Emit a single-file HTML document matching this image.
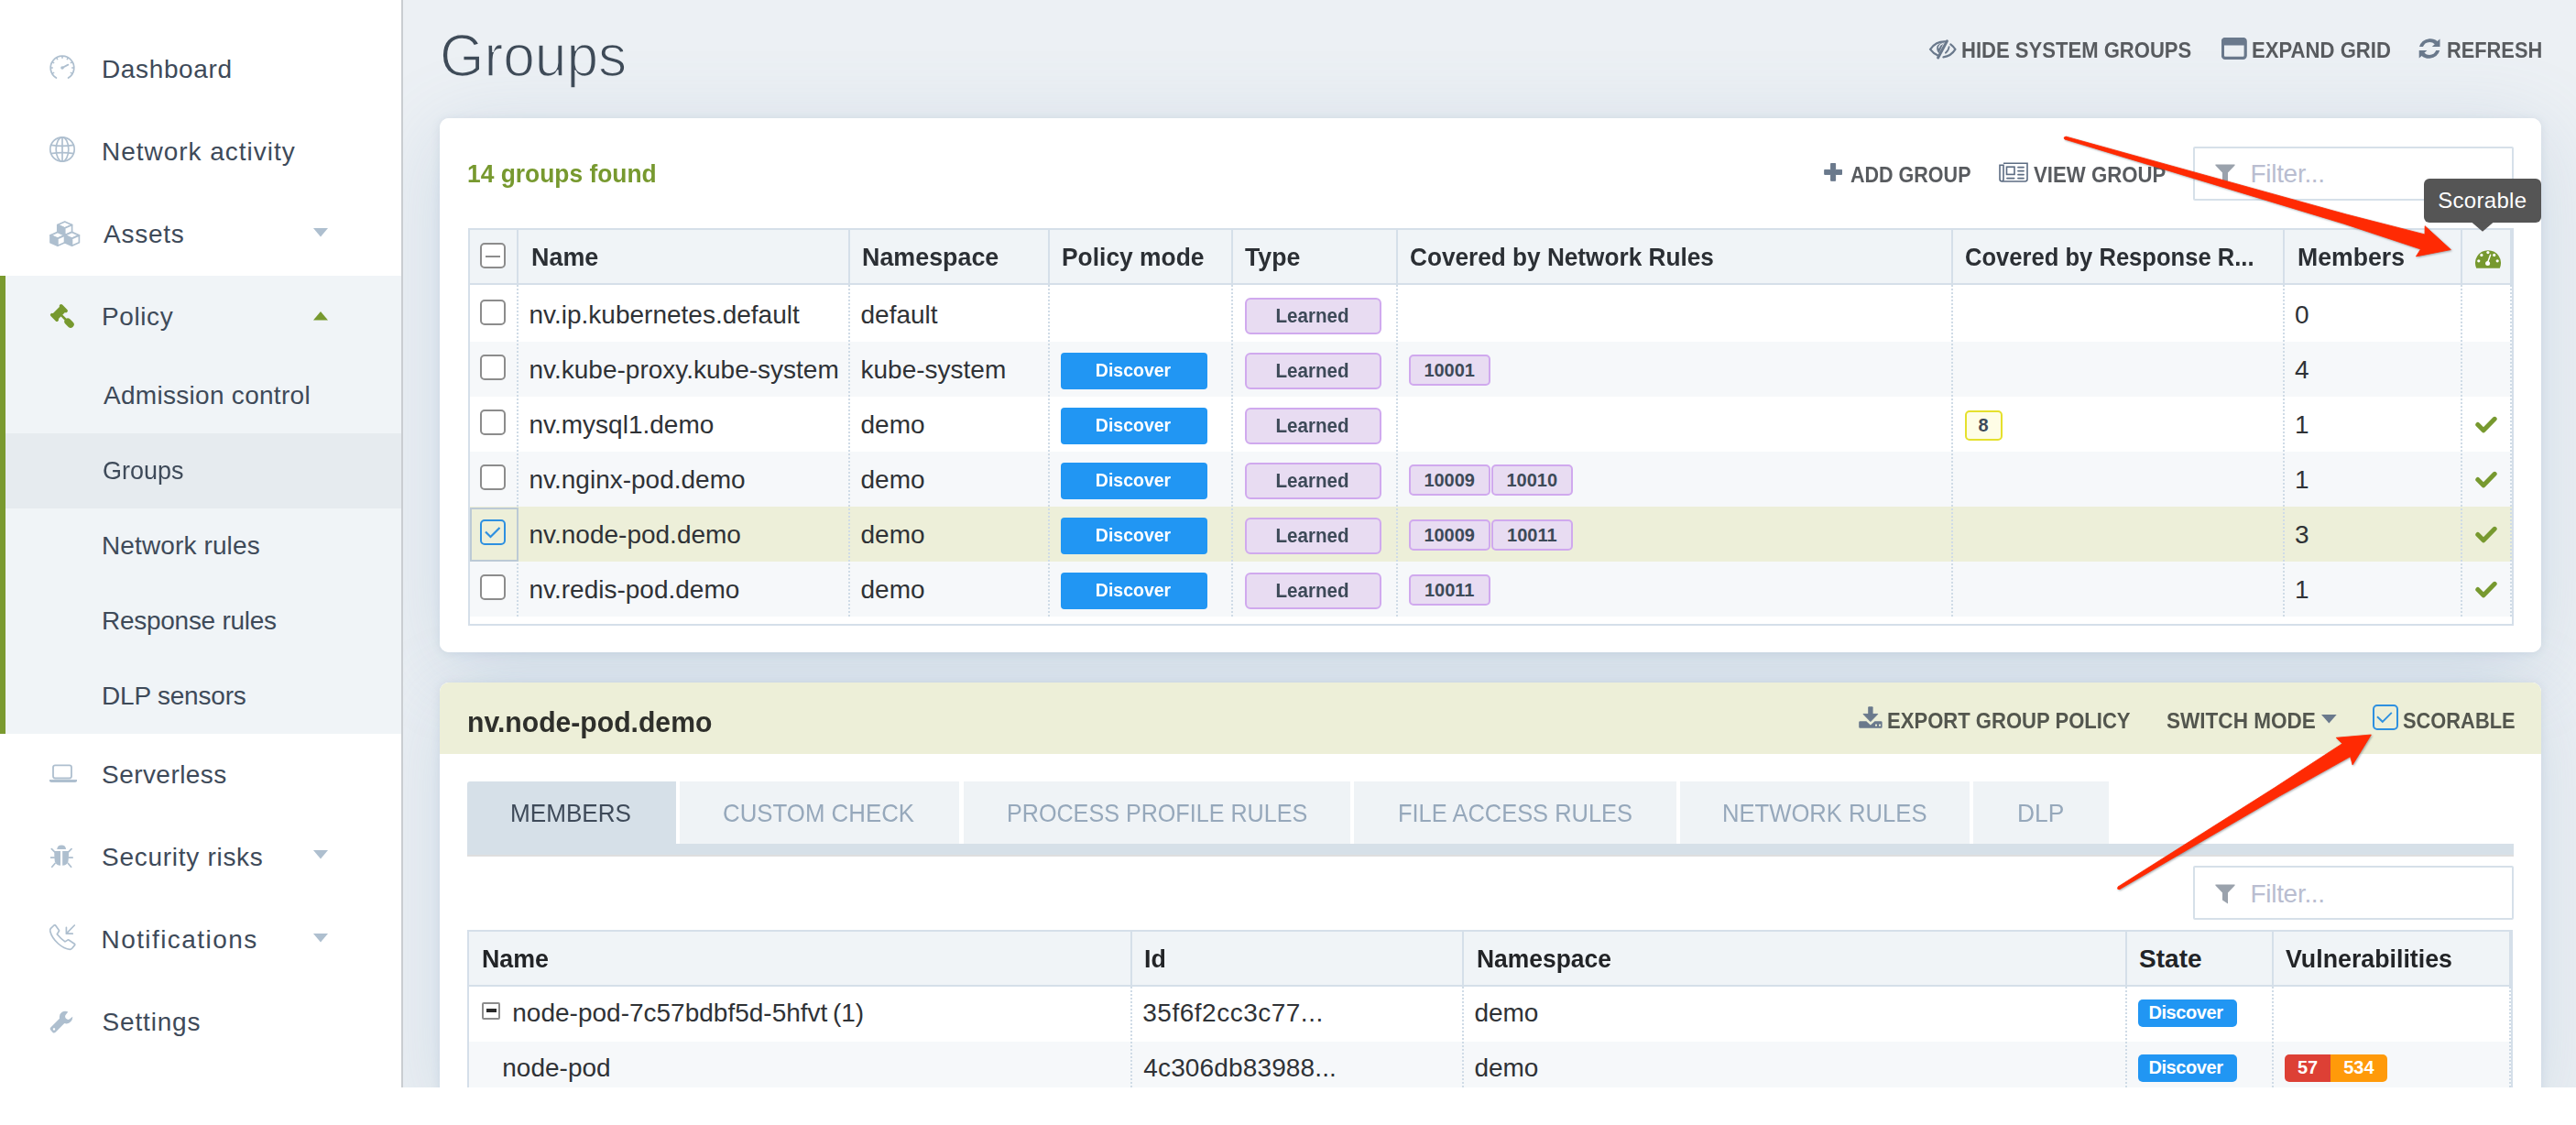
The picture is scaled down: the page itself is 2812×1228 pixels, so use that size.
<!DOCTYPE html>
<html><head><meta charset="utf-8"><title>Groups</title>
<style>
html,body{margin:0;padding:0}
body{width:2812px;height:1228px;position:relative;overflow:hidden;background:#fff;font-family:"Liberation Sans",sans-serif}
.t{position:absolute;white-space:nowrap;line-height:1}
.r{position:absolute;box-sizing:border-box}
</style></head><body>

<div class="r" style="left:0px;top:0px;width:439px;height:1187px;background:#fff;"></div>
<div class="r" style="left:438px;top:0px;width:2px;height:1187px;background:#C9CDD1;"></div>
<div class="r" style="left:440px;top:0px;width:2372px;height:1187px;background:#ECF0F4;"></div>
<div class="t" style="left:480.0px;top:28.7px;font-size:64px;color:#3F4B58;transform:scaleX(0.9726);transform-origin:0 0;-webkit-text-stroke:1.6px #ECF0F4;">Groups</div>
<div class="t" style="left:2140.5px;top:42.9px;font-size:24px;font-weight:700;color:#585B5F;transform:scaleX(0.9192);transform-origin:0 0;">HIDE SYSTEM GROUPS</div>
<div class="t" style="left:2458.2px;top:42.9px;font-size:24px;font-weight:700;color:#585B5F;transform:scaleX(0.9212);transform-origin:0 0;">EXPAND GRID</div>
<div class="t" style="left:2670.5px;top:42.9px;font-size:24px;font-weight:700;color:#585B5F;transform:scaleX(0.9084);transform-origin:0 0;">REFRESH</div>
<svg class="r" style="left:2100px;top:35px;" width="50" height="40" viewBox="0 0 50 40"><g fill="none" stroke="#6A798C" stroke-linecap="round"><path d="M24.2 10.4 Q18.5 10 14.2 12.2 Q9.8 14.6 7.1 18.8 Q10.5 23.3 15.4 25.6" stroke-width="2.2"/><path d="M29.3 13.4 Q32.4 15.7 34.4 18.8 Q29.8 26.2 21.4 27.3" stroke-width="2.2"/><path d="M27.6 16.2 Q27.2 20.2 23.8 22.8" stroke-width="1.7"/><path d="M25.4 9.9 L15.6 28" stroke-width="3"/></g><path d="M21.8 11.6 Q16.5 11.8 14.3 15.8 Q13.6 20.6 16.6 23.2 Z" fill="#6A798C"/><path d="M16.4 17.2 Q17.2 13.5 20.6 12.6" fill="none" stroke="#ECF0F4" stroke-width="1.1" stroke-linecap="round"/></svg>
<svg class="r" style="left:2424.7px;top:41px;" width="28" height="24" viewBox="0 0 28 24"><rect x="1.4" y="1.4" width="24.8" height="21" rx="2.6" fill="none" stroke="#6A798C" stroke-width="3.2"/><rect x="1" y="1" width="25.6" height="7.4" rx="2" fill="#6A798C"/></svg>
<svg class="r" style="left:2640.3px;top:41px;" width="24.5" height="24" viewBox="0 0 24.5 24"><g fill="#6A798C"><path d="M1 10 Q3 2.5 12 1.2 Q17.5 1 20.6 4 L23.5 1.4 V10 H14.8 L17.8 7.2 Q15.5 5 12.2 5 Q6.8 5.2 5 10 Z"/><path d="M23.2 14 Q21.2 21.5 12.2 22.8 Q6.7 23 3.6 20 L0.7 22.6 V14 H9.4 L6.4 16.8 Q8.7 19 12 19 Q17.4 18.8 19.2 14 Z"/></g></svg>
<div class="r" style="left:480px;top:129px;width:2294px;height:583px;background:#fff;border-radius:10px;box-shadow:0 1px 10px rgba(100,130,160,0.15),0 18px 90px rgba(100,140,180,0.22);"></div>
<div class="r" style="left:480px;top:745px;width:2294px;height:460px;background:#fff;border-radius:10px;box-shadow:0 1px 10px rgba(100,130,160,0.15),0 18px 90px rgba(100,140,180,0.22);"></div>
<div class="r" style="left:480px;top:129px;width:2294px;height:583px;background:#fff;border-radius:10px;"></div>
<div class="t" style="left:509.5px;top:175.5px;font-size:28px;font-weight:700;color:#77992F;transform:scaleX(0.9426);transform-origin:0 0;">14 groups found</div>
<svg class="r" style="left:1990px;top:177px;" width="22" height="22" viewBox="0 0 22 22"><path d="M8.6 1.5 H13.6 V8.4 H20.5 V13.4 H13.6 V20.3 H8.6 V13.4 H1.7 V8.4 H8.6Z" fill="#6A798C" stroke="#6A798C" stroke-width="1" stroke-linejoin="round"/></svg>
<div class="t" style="left:2020.2px;top:178.5px;font-size:24px;font-weight:700;color:#585B5F;transform:scaleX(0.8964);transform-origin:0 0;">ADD GROUP</div>
<svg class="r" style="left:2182.4px;top:176.9px;" width="32" height="22" viewBox="0 0 32 22"><g fill="none" stroke="#5C6C82" stroke-width="1.6"><path d="M5 1.2 H31 V18.5 Q31 21 28.5 21 H3.5 Q1 21 1 18.5 V3.3 H5 V18.5 Q5 20.8 3.2 21"/><rect x="8.5" y="5.2" width="8.5" height="8.2"/></g><g stroke="#5C6C82" stroke-width="1.8" stroke-linecap="round"><path d="M21 5.6H27M21 9.6H27M21 13.6H27M9 17.6H16.6M21 17.6H27"/></g></svg>
<div class="t" style="left:2220.0px;top:178.6px;font-size:24px;font-weight:700;color:#585B5F;transform:scaleX(0.9250);transform-origin:0 0;">VIEW GROUP</div>
<div class="r" style="left:2394px;top:159.6px;width:350px;height:59px;border:2px solid #D6E0E9;border-radius:2px;background:#fff;"></div>
<svg class="r" style="left:2418px;top:179.4px;" width="22" height="22" viewBox="0 0 22 22"><path d="M0.8 0.5 H21.2 Q22 0.5 21.6 1.5 L14 9.6 V21.6 L8 17.6 V9.6 L0.4 1.5 Q0 0.5 0.8 0.5Z" fill="#9AA2AC"/></svg>
<div class="t" style="left:2456.5px;top:175.9px;font-size:28px;color:#B9BDD0;letter-spacing:-0.3px;">Filter...</div>
<div class="r" style="left:510.5px;top:249px;width:2233.0px;height:434px;border:2px solid #D5DFE9;"></div>
<div class="r" style="left:512.5px;top:251px;width:2229.0px;height:58px;background:#F0F4F7;"></div>
<div class="r" style="left:512.5px;top:309px;width:2229.0px;height:2px;background:#D5DFE9;"></div>
<div class="r" style="left:564px;top:251px;width:2px;height:58px;background:#D5DFE9;"></div>
<div class="r" style="left:926px;top:251px;width:2px;height:58px;background:#D5DFE9;"></div>
<div class="r" style="left:1144px;top:251px;width:2px;height:58px;background:#D5DFE9;"></div>
<div class="r" style="left:1344px;top:251px;width:2px;height:58px;background:#D5DFE9;"></div>
<div class="r" style="left:1524px;top:251px;width:2px;height:58px;background:#D5DFE9;"></div>
<div class="r" style="left:2130px;top:251px;width:2px;height:58px;background:#D5DFE9;"></div>
<div class="r" style="left:2492px;top:251px;width:2px;height:58px;background:#D5DFE9;"></div>
<div class="r" style="left:2686px;top:251px;width:2px;height:58px;background:#D5DFE9;"></div>
<div class="r" style="left:2739.5px;top:251px;width:2px;height:58px;background:#D5DFE9;"></div>
<div class="r" style="left:512.5px;top:311px;width:2229.0px;height:62px;background:#fff;"></div>
<div class="r" style="left:512.5px;top:373px;width:2229.0px;height:60px;background:#F6F8FA;"></div>
<div class="r" style="left:512.5px;top:433px;width:2229.0px;height:60px;background:#fff;"></div>
<div class="r" style="left:512.5px;top:493px;width:2229.0px;height:60px;background:#F6F8FA;"></div>
<div class="r" style="left:512.5px;top:553px;width:2229.0px;height:60px;background:#EDEFD9;"></div>
<div class="r" style="left:512.5px;top:613px;width:2229.0px;height:60px;background:#F6F8FA;"></div>
<div class="r" style="left:564px;top:311px;width:2px;height:362px;border-left:2px dotted #CFDBE6;"></div>
<div class="r" style="left:926px;top:311px;width:2px;height:362px;border-left:2px dotted #CFDBE6;"></div>
<div class="r" style="left:1144px;top:311px;width:2px;height:362px;border-left:2px dotted #CFDBE6;"></div>
<div class="r" style="left:1344px;top:311px;width:2px;height:362px;border-left:2px dotted #CFDBE6;"></div>
<div class="r" style="left:1524px;top:311px;width:2px;height:362px;border-left:2px dotted #CFDBE6;"></div>
<div class="r" style="left:2130px;top:311px;width:2px;height:362px;border-left:2px dotted #CFDBE6;"></div>
<div class="r" style="left:2492px;top:311px;width:2px;height:362px;border-left:2px dotted #CFDBE6;"></div>
<div class="r" style="left:2686px;top:311px;width:2px;height:362px;border-left:2px dotted #CFDBE6;"></div>
<div class="r" style="left:2739.5px;top:311px;width:2px;height:362px;border-left:2px dotted #CFDBE6;"></div>
<div class="t" style="left:579.5px;top:267.4px;font-size:28px;font-weight:700;color:#2B2F34;transform:scaleX(0.9607);transform-origin:0 0;">Name</div>
<div class="t" style="left:941.3px;top:267.4px;font-size:28px;font-weight:700;color:#2B2F34;transform:scaleX(0.9589);transform-origin:0 0;">Namespace</div>
<div class="t" style="left:1159.3px;top:267.4px;font-size:28px;font-weight:700;color:#2B2F34;transform:scaleX(0.9424);transform-origin:0 0;">Policy mode</div>
<div class="t" style="left:1358.9px;top:267.4px;font-size:28px;font-weight:700;color:#2B2F34;transform:scaleX(0.9526);transform-origin:0 0;">Type</div>
<div class="t" style="left:1539.4px;top:267.4px;font-size:28px;font-weight:700;color:#2B2F34;transform:scaleX(0.9352);transform-origin:0 0;">Covered by Network Rules</div>
<div class="t" style="left:2145.4px;top:267.4px;font-size:28px;font-weight:700;color:#2B2F34;transform:scaleX(0.9135);transform-origin:0 0;">Covered by Response R...</div>
<div class="t" style="left:2507.5px;top:267.4px;font-size:28px;font-weight:700;color:#2B2F34;transform:scaleX(0.9512);transform-origin:0 0;">Members</div>
<div class="r" style="left:524px;top:265.4px;width:28px;height:27.5px;border:2.2px solid #8C8C8C;border-radius:5px;background:#fff;"></div>
<div class="r" style="left:530px;top:279px;width:16px;height:2px;background:#8C8C8C;"></div>
<div class="r" style="left:512.5px;top:553.5px;width:53px;height:59px;border:2px solid #BCCAD5;"></div>
<div class="r" style="left:524px;top:327.3px;width:28px;height:27.5px;border:2.2px solid #8C8C8C;border-radius:5px;background:#fff;"></div>
<div class="t" style="left:577.5px;top:329.8px;font-size:28px;color:#2F3236;">nv.ip.kubernetes.default</div>
<div class="t" style="left:939.5px;top:329.8px;font-size:28px;color:#2F3236;">default</div>
<div class="t" style="left:2505.0px;top:329.8px;font-size:28px;color:#2F3236;">0</div>
<div class="r" style="left:1358.6px;top:324.8px;width:149px;height:40px;background:#E8DCF2;border:2px solid #D0A9EE;border-radius:6px;"></div>
<div class="t" style="left:1357.6px;top:334.1px;font-size:22px;font-weight:700;color:#3D4A58;transform:scaleX(0.9369);transform-origin:50% 0;width:149px;text-align:center;">Learned</div>
<div class="r" style="left:524px;top:387.3px;width:28px;height:27.5px;border:2.2px solid #8C8C8C;border-radius:5px;background:#fff;"></div>
<div class="t" style="left:577.5px;top:389.8px;font-size:28px;color:#2F3236;">nv.kube-proxy.kube-system</div>
<div class="t" style="left:939.5px;top:389.8px;font-size:28px;color:#2F3236;">kube-system</div>
<div class="t" style="left:2505.0px;top:389.8px;font-size:28px;color:#2F3236;">4</div>
<div class="r" style="left:1158px;top:385.2px;width:160px;height:39.6px;background:#2196F3;border-radius:4px;"></div>
<div class="t" style="left:1156.5px;top:393.3px;font-size:21px;font-weight:700;color:#fff;transform:scaleX(0.9290);transform-origin:50% 0;width:160px;text-align:center;">Discover</div>
<div class="r" style="left:1358.6px;top:384.8px;width:149px;height:40px;background:#E8DCF2;border:2px solid #D0A9EE;border-radius:6px;"></div>
<div class="t" style="left:1357.6px;top:394.1px;font-size:22px;font-weight:700;color:#3D4A58;transform:scaleX(0.9369);transform-origin:50% 0;width:149px;text-align:center;">Learned</div>
<div class="r" style="left:1538.2px;top:387.3px;width:89px;height:34px;background:#E8DCF2;border:2px solid #D0A9EE;border-radius:5px;"></div>
<div class="t" style="left:1537.7px;top:393.9px;font-size:20px;font-weight:700;color:#3D4A58;width:89px;text-align:center;">10001</div>
<div class="r" style="left:524px;top:447.3px;width:28px;height:27.5px;border:2.2px solid #8C8C8C;border-radius:5px;background:#fff;"></div>
<div class="t" style="left:577.5px;top:449.8px;font-size:28px;color:#2F3236;">nv.mysql1.demo</div>
<div class="t" style="left:939.5px;top:449.8px;font-size:28px;color:#2F3236;">demo</div>
<div class="t" style="left:2505.0px;top:449.8px;font-size:28px;color:#2F3236;">1</div>
<div class="r" style="left:1158px;top:445.2px;width:160px;height:39.6px;background:#2196F3;border-radius:4px;"></div>
<div class="t" style="left:1156.5px;top:453.3px;font-size:21px;font-weight:700;color:#fff;transform:scaleX(0.9290);transform-origin:50% 0;width:160px;text-align:center;">Discover</div>
<div class="r" style="left:1358.6px;top:444.8px;width:149px;height:40px;background:#E8DCF2;border:2px solid #D0A9EE;border-radius:6px;"></div>
<div class="t" style="left:1357.6px;top:454.1px;font-size:22px;font-weight:700;color:#3D4A58;transform:scaleX(0.9369);transform-origin:50% 0;width:149px;text-align:center;">Learned</div>
<svg class="r" style="left:2702px;top:454px;" width="24" height="19" viewBox="0 0 24 19"><path d="M2.8 9.5 L9 15.8 L21.2 3.3" fill="none" stroke="#77992F" stroke-width="5" stroke-linejoin="round" stroke-linecap="round"/></svg>
<div class="r" style="left:524px;top:507.3px;width:28px;height:27.5px;border:2.2px solid #8C8C8C;border-radius:5px;background:#fff;"></div>
<div class="t" style="left:577.5px;top:509.8px;font-size:28px;color:#2F3236;">nv.nginx-pod.demo</div>
<div class="t" style="left:939.5px;top:509.8px;font-size:28px;color:#2F3236;">demo</div>
<div class="t" style="left:2505.0px;top:509.8px;font-size:28px;color:#2F3236;">1</div>
<div class="r" style="left:1158px;top:505.2px;width:160px;height:39.6px;background:#2196F3;border-radius:4px;"></div>
<div class="t" style="left:1156.5px;top:513.3px;font-size:21px;font-weight:700;color:#fff;transform:scaleX(0.9290);transform-origin:50% 0;width:160px;text-align:center;">Discover</div>
<div class="r" style="left:1358.6px;top:504.8px;width:149px;height:40px;background:#E8DCF2;border:2px solid #D0A9EE;border-radius:6px;"></div>
<div class="t" style="left:1357.6px;top:514.1px;font-size:22px;font-weight:700;color:#3D4A58;transform:scaleX(0.9369);transform-origin:50% 0;width:149px;text-align:center;">Learned</div>
<div class="r" style="left:1538.2px;top:507.3px;width:89px;height:34px;background:#E8DCF2;border:2px solid #D0A9EE;border-radius:5px;"></div>
<div class="t" style="left:1537.7px;top:513.9px;font-size:20px;font-weight:700;color:#3D4A58;width:89px;text-align:center;">10009</div>
<div class="r" style="left:1628.3px;top:507.3px;width:89px;height:34px;background:#E8DCF2;border:2px solid #D0A9EE;border-radius:5px;"></div>
<div class="t" style="left:1627.8px;top:513.9px;font-size:20px;font-weight:700;color:#3D4A58;width:89px;text-align:center;">10010</div>
<svg class="r" style="left:2702px;top:514px;" width="24" height="19" viewBox="0 0 24 19"><path d="M2.8 9.5 L9 15.8 L21.2 3.3" fill="none" stroke="#77992F" stroke-width="5" stroke-linejoin="round" stroke-linecap="round"/></svg>
<div class="r" style="left:524px;top:567.3px;width:28px;height:27.5px;border:2.2px solid #2E90E0;border-radius:5px;background:transparent;"></div>
<svg class="r" style="left:524px;top:567.3px;" width="28" height="28" viewBox="0 0 28 28"><path d="M6 13.5 L11.5 19 L21.5 9" fill="none" stroke="#2E90E0" stroke-width="2.2"/></svg>
<div class="t" style="left:577.5px;top:569.8px;font-size:28px;color:#2F3236;">nv.node-pod.demo</div>
<div class="t" style="left:939.5px;top:569.8px;font-size:28px;color:#2F3236;">demo</div>
<div class="t" style="left:2505.0px;top:569.8px;font-size:28px;color:#2F3236;">3</div>
<div class="r" style="left:1158px;top:565.2px;width:160px;height:39.6px;background:#2196F3;border-radius:4px;"></div>
<div class="t" style="left:1156.5px;top:573.3px;font-size:21px;font-weight:700;color:#fff;transform:scaleX(0.9290);transform-origin:50% 0;width:160px;text-align:center;">Discover</div>
<div class="r" style="left:1358.6px;top:564.8px;width:149px;height:40px;background:#E8DCF2;border:2px solid #D0A9EE;border-radius:6px;"></div>
<div class="t" style="left:1357.6px;top:574.1px;font-size:22px;font-weight:700;color:#3D4A58;transform:scaleX(0.9369);transform-origin:50% 0;width:149px;text-align:center;">Learned</div>
<div class="r" style="left:1538.2px;top:567.3px;width:89px;height:34px;background:#E8DCF2;border:2px solid #D0A9EE;border-radius:5px;"></div>
<div class="t" style="left:1537.7px;top:573.9px;font-size:20px;font-weight:700;color:#3D4A58;width:89px;text-align:center;">10009</div>
<div class="r" style="left:1628.3px;top:567.3px;width:89px;height:34px;background:#E8DCF2;border:2px solid #D0A9EE;border-radius:5px;"></div>
<div class="t" style="left:1627.8px;top:573.9px;font-size:20px;font-weight:700;color:#3D4A58;width:89px;text-align:center;">10011</div>
<svg class="r" style="left:2702px;top:574px;" width="24" height="19" viewBox="0 0 24 19"><path d="M2.8 9.5 L9 15.8 L21.2 3.3" fill="none" stroke="#77992F" stroke-width="5" stroke-linejoin="round" stroke-linecap="round"/></svg>
<div class="r" style="left:524px;top:627.3px;width:28px;height:27.5px;border:2.2px solid #8C8C8C;border-radius:5px;background:#fff;"></div>
<div class="t" style="left:577.5px;top:629.8px;font-size:28px;color:#2F3236;">nv.redis-pod.demo</div>
<div class="t" style="left:939.5px;top:629.8px;font-size:28px;color:#2F3236;">demo</div>
<div class="t" style="left:2505.0px;top:629.8px;font-size:28px;color:#2F3236;">1</div>
<div class="r" style="left:1158px;top:625.2px;width:160px;height:39.6px;background:#2196F3;border-radius:4px;"></div>
<div class="t" style="left:1156.5px;top:633.3px;font-size:21px;font-weight:700;color:#fff;transform:scaleX(0.9290);transform-origin:50% 0;width:160px;text-align:center;">Discover</div>
<div class="r" style="left:1358.6px;top:624.8px;width:149px;height:40px;background:#E8DCF2;border:2px solid #D0A9EE;border-radius:6px;"></div>
<div class="t" style="left:1357.6px;top:634.1px;font-size:22px;font-weight:700;color:#3D4A58;transform:scaleX(0.9369);transform-origin:50% 0;width:149px;text-align:center;">Learned</div>
<div class="r" style="left:1538.2px;top:627.3px;width:89px;height:34px;background:#E8DCF2;border:2px solid #D0A9EE;border-radius:5px;"></div>
<div class="t" style="left:1537.7px;top:633.9px;font-size:20px;font-weight:700;color:#3D4A58;width:89px;text-align:center;">10011</div>
<svg class="r" style="left:2702px;top:634px;" width="24" height="19" viewBox="0 0 24 19"><path d="M2.8 9.5 L9 15.8 L21.2 3.3" fill="none" stroke="#77992F" stroke-width="5" stroke-linejoin="round" stroke-linecap="round"/></svg>
<div class="r" style="left:2144.5px;top:447.6px;width:41px;height:33px;background:#FEFDE6;border:2px solid #E5E02C;border-radius:5px;"></div>
<div class="t" style="left:2144.5px;top:453.9px;font-size:20px;font-weight:700;color:#3D4A58;width:41px;text-align:center;">8</div>
<svg class="r" style="left:2701.9px;top:271.2px;" width="28" height="22" viewBox="0 0 28 22"><path d="M1.2 21.8 A14 14 0 1 1 26.8 21.8 Z" fill="#77992F"/><g fill="#fff"><circle cx="13.9" cy="4.6" r="1.6"/><circle cx="6.9" cy="7.4" r="1.6"/><circle cx="20.7" cy="7.4" r="1.6"/><circle cx="3.8" cy="13.8" r="1.6"/><circle cx="24.2" cy="13.8" r="1.6"/><circle cx="13.6" cy="16.6" r="2.5"/></g><path d="M13.4 16 L16.6 7.2" stroke="#fff" stroke-width="1.5" stroke-linecap="round"/></svg>
<div class="r" style="left:480px;top:745px;width:2294px;height:460px;background:#fff;border-radius:10px;"></div>
<div class="r" style="left:480px;top:745px;width:2294px;height:77.6px;background:#EDEFD8;border-radius:10px 10px 0 0;"></div>
<div class="t" style="left:509.5px;top:771.7px;font-size:32px;font-weight:700;color:#2E2F2B;transform:scaleX(0.9419);transform-origin:0 0;">nv.node-pod.demo</div>
<svg class="r" style="left:2029.2px;top:771px;" width="26" height="24" viewBox="0 0 26 24"><g fill="#6A798C"><rect x="10.2" y="0.2" width="5.4" height="9" rx="1"/><path d="M5 8.4 H20.8 L12.9 16.6 Z" stroke="#6A798C" stroke-width="1" stroke-linejoin="round"/><path d="M1.5 16.3 H8.3 L12.9 20.6 L17.5 16.3 H24.3 Q25.6 16.3 25.6 17.6 V22.5 Q25.6 23.8 24.3 23.8 H1.5 Q0.2 23.8 0.2 22.5 V17.6 Q0.2 16.3 1.5 16.3Z"/></g><rect x="18" y="19.6" width="2" height="2" fill="#EDEFD8"/><rect x="22" y="19.6" width="2" height="2" fill="#EDEFD8"/></svg>
<div class="t" style="left:2060.4px;top:774.9px;font-size:24px;font-weight:700;color:#53564E;transform:scaleX(0.9190);transform-origin:0 0;">EXPORT GROUP POLICY</div>
<div class="t" style="left:2365.1px;top:774.9px;font-size:24px;font-weight:700;color:#53564E;transform:scaleX(0.9394);transform-origin:0 0;">SWITCH MODE</div>
<svg class="r" style="left:2534.3px;top:780.3px;" width="17" height="10" viewBox="0 0 17 10"><path d="M0 0 H16.7 L8.35 9.5Z" fill="#6A798C"/></svg>
<div class="r" style="left:2590px;top:769px;width:27.8px;height:27.8px;border:2px solid #2E90E0;border-radius:5px;"></div>
<svg class="r" style="left:2590px;top:769px;" width="28" height="28" viewBox="0 0 28 28"><path d="M5 13.2 L10.8 18.8 L20.8 8.8" fill="none" stroke="#2E90E0" stroke-width="1.9"/></svg>
<div class="t" style="left:2623.1px;top:774.9px;font-size:24px;font-weight:700;color:#53564E;transform:scaleX(0.9101);transform-origin:0 0;">SCORABLE</div>
<div class="r" style="left:510.4px;top:921px;width:2233.6px;height:12.2px;background:#D6E0E8;"></div>
<div class="r" style="left:510.4px;top:933.2px;width:2233.6px;height:1.8px;background:#DEDEDE;"></div>
<div class="r" style="left:510.4px;top:853px;width:227.39999999999998px;height:68px;background:#D6E0E8;border-radius:3px 0 0 0;"></div>
<div class="t" style="left:557.3px;top:873.7px;font-size:28px;color:#3E4A59;transform:scaleX(0.9322);transform-origin:0 0;">MEMBERS</div>
<div class="r" style="left:742.2px;top:853px;width:305.29999999999995px;height:68px;background:#EFF3F6;"></div>
<div class="t" style="left:789.1px;top:873.7px;font-size:28px;color:#96A8BB;transform:scaleX(0.9223);transform-origin:0 0;">CUSTOM CHECK</div>
<div class="r" style="left:1052.4px;top:853px;width:421.5999999999999px;height:68px;background:#EFF3F6;"></div>
<div class="t" style="left:1098.8px;top:873.7px;font-size:28px;color:#96A8BB;transform:scaleX(0.8977);transform-origin:0 0;">PROCESS PROFILE RULES</div>
<div class="r" style="left:1478.4px;top:853px;width:351.5999999999999px;height:68px;background:#EFF3F6;"></div>
<div class="t" style="left:1525.5px;top:873.7px;font-size:28px;color:#96A8BB;transform:scaleX(0.9091);transform-origin:0 0;">FILE ACCESS RULES</div>
<div class="r" style="left:1834px;top:853px;width:316px;height:68px;background:#EFF3F6;"></div>
<div class="t" style="left:1880.1px;top:873.7px;font-size:28px;color:#96A8BB;transform:scaleX(0.9150);transform-origin:0 0;">NETWORK RULES</div>
<div class="r" style="left:2153.8px;top:853px;width:148.19999999999982px;height:68px;background:#EFF3F6;"></div>
<div class="t" style="left:2202.3px;top:873.7px;font-size:28px;color:#96A8BB;transform:scaleX(0.9413);transform-origin:0 0;">DLP</div>
<div class="r" style="left:2394px;top:945.2px;width:350px;height:59px;border:2px solid #D6E0E9;border-radius:2px;background:#fff;"></div>
<svg class="r" style="left:2418px;top:965.0px;" width="22" height="22" viewBox="0 0 22 22"><path d="M0.8 0.5 H21.2 Q22 0.5 21.6 1.5 L14 9.6 V21.6 L8 17.6 V9.6 L0.4 1.5 Q0 0.5 0.8 0.5Z" fill="#9AA2AC"/></svg>
<div class="t" style="left:2456.5px;top:961.5px;font-size:28px;color:#B9BDD0;letter-spacing:-0.3px;">Filter...</div>
<div class="r" style="left:510.4px;top:1015px;width:2233.0px;height:200px;border:2px solid #D5DFE9;"></div>
<div class="r" style="left:512.4px;top:1017px;width:2229.0px;height:58px;background:#F0F4F7;"></div>
<div class="r" style="left:512.4px;top:1075px;width:2229.0px;height:2px;background:#D5DFE9;"></div>
<div class="r" style="left:1234px;top:1017px;width:2px;height:58px;background:#D5DFE9;"></div>
<div class="r" style="left:1596px;top:1017px;width:2px;height:58px;background:#D5DFE9;"></div>
<div class="r" style="left:2320px;top:1017px;width:2px;height:58px;background:#D5DFE9;"></div>
<div class="r" style="left:2480px;top:1017px;width:2px;height:58px;background:#D5DFE9;"></div>
<div class="r" style="left:2739.4px;top:1017px;width:2px;height:58px;background:#D5DFE9;"></div>
<div class="r" style="left:512.4px;top:1077px;width:2229.0px;height:60px;background:#fff;"></div>
<div class="r" style="left:512.4px;top:1137px;width:2229.0px;height:70px;background:#F6F8FA;"></div>
<div class="r" style="left:1234px;top:1077px;width:2px;height:130px;border-left:2px dotted #CFDBE6;"></div>
<div class="r" style="left:1596px;top:1077px;width:2px;height:130px;border-left:2px dotted #CFDBE6;"></div>
<div class="r" style="left:2320px;top:1077px;width:2px;height:130px;border-left:2px dotted #CFDBE6;"></div>
<div class="r" style="left:2480px;top:1077px;width:2px;height:130px;border-left:2px dotted #CFDBE6;"></div>
<div class="r" style="left:2739.4px;top:1077px;width:2px;height:130px;border-left:2px dotted #CFDBE6;"></div>
<div class="t" style="left:525.6px;top:1033.4px;font-size:28px;font-weight:700;color:#222427;transform:scaleX(0.9567);transform-origin:0 0;">Name</div>
<div class="t" style="left:1249.1px;top:1033.4px;font-size:28px;font-weight:700;color:#222427;transform:scaleX(0.9558);transform-origin:0 0;">Id</div>
<div class="t" style="left:1611.5px;top:1033.4px;font-size:28px;font-weight:700;color:#222427;transform:scaleX(0.9435);transform-origin:0 0;">Namespace</div>
<div class="t" style="left:2335.1px;top:1033.4px;font-size:28px;font-weight:700;color:#222427;">State</div>
<div class="t" style="left:2495.0px;top:1033.4px;font-size:28px;font-weight:700;color:#222427;transform:scaleX(0.9559);transform-origin:0 0;">Vulnerabilities</div>
<div class="r" style="left:526.2px;top:1093.7px;width:20px;height:19.5px;border:2px solid #8C8C8C;border-radius:2px;background:#fff;"></div>
<div class="r" style="left:530.5px;top:1100.5px;width:11.5px;height:4px;background:#2A2A2A;"></div>
<div class="t" style="left:559.3px;top:1092.0px;font-size:28px;color:#2F3236;">node-pod-7c57bdbf5d-5hfvt&#8201;(1)</div>
<div class="t" style="left:1247.3px;top:1092.0px;font-size:28px;color:#2F3236;letter-spacing:0.5px;">35f6f2cc3c77...</div>
<div class="t" style="left:1609.4px;top:1092.0px;font-size:28px;color:#2F3236;">demo</div>
<div class="r" style="left:2334.2px;top:1091px;width:107.7px;height:29.7px;background:#2196F3;border-radius:5px;"></div>
<div class="t" style="left:2332.2px;top:1095.4px;font-size:20px;font-weight:700;color:#fff;letter-spacing:-0.4px;width:107.7px;text-align:center;">Discover</div>
<div class="t" style="left:548.3px;top:1151.6px;font-size:28px;color:#2F3236;">node-pod</div>
<div class="t" style="left:1248.3px;top:1151.6px;font-size:28px;color:#2F3236;letter-spacing:0.14px;">4c306db83988...</div>
<div class="t" style="left:1609.4px;top:1151.6px;font-size:28px;color:#2F3236;">demo</div>
<div class="r" style="left:2334.2px;top:1151px;width:107.7px;height:29.7px;background:#2196F3;border-radius:5px;"></div>
<div class="t" style="left:2332.2px;top:1155.4px;font-size:20px;font-weight:700;color:#fff;letter-spacing:-0.4px;width:107.7px;text-align:center;">Discover</div>
<div class="r" style="left:2494.1px;top:1151px;width:50px;height:29.7px;background:#DD4035;border-radius:5px 0 0 5px;"></div>
<div class="t" style="left:2494.1px;top:1155.4px;font-size:20px;font-weight:700;color:#fff;width:50px;text-align:center;">57</div>
<div class="r" style="left:2544.1px;top:1151px;width:61.5px;height:29.7px;background:#FF9A0A;border-radius:0 5px 5px 0;"></div>
<div class="t" style="left:2544.1px;top:1155.4px;font-size:20px;font-weight:700;color:#fff;width:61.5px;text-align:center;">534</div>
<div class="r" style="left:0px;top:1187px;width:2812px;height:41px;background:#fff;"></div>
<div class="r" style="left:0px;top:0px;width:438px;height:1187px;background:#fff;"></div>
<div class="r" style="left:438px;top:0px;width:2px;height:1187px;background:#C9CDD1;"></div>
<div class="r" style="left:0px;top:301px;width:438px;height:500px;background:#F0F4F7;"></div>
<div class="r" style="left:6px;top:473px;width:432px;height:82px;background:#E6EBEF;"></div>
<div class="r" style="left:0px;top:301px;width:6px;height:500px;background:#7A9A2F;"></div>
<div class="t" style="left:111.0px;top:61.5px;font-size:28px;color:#3E4A59;letter-spacing:0.63px;">Dashboard</div>
<div class="t" style="left:111.0px;top:151.6px;font-size:28px;color:#3E4A59;letter-spacing:0.98px;">Network activity</div>
<div class="t" style="left:113.0px;top:241.5px;font-size:28px;color:#3E4A59;letter-spacing:0.74px;">Assets</div>
<div class="t" style="left:111.0px;top:331.6px;font-size:28px;color:#3E4A59;letter-spacing:0.6px;">Policy</div>
<div class="t" style="left:113.0px;top:417.5px;font-size:28px;color:#3E4A59;letter-spacing:0.29px;">Admission control</div>
<div class="t" style="left:112.0px;top:499.6px;font-size:28px;color:#3E4A59;transform:scaleX(0.9641);transform-origin:0 0;">Groups</div>
<div class="t" style="left:111.0px;top:581.6px;font-size:28px;color:#3E4A59;letter-spacing:0.125px;">Network rules</div>
<div class="t" style="left:111.0px;top:663.5px;font-size:28px;color:#3E4A59;letter-spacing:-0.27px;">Response rules</div>
<div class="t" style="left:111.0px;top:745.6px;font-size:28px;color:#3E4A59;letter-spacing:-0.2px;">DLP sensors</div>
<div class="t" style="left:111.0px;top:831.5px;font-size:28px;color:#3E4A59;letter-spacing:0.45px;">Serverless</div>
<div class="t" style="left:111.0px;top:922.0px;font-size:28px;color:#3E4A59;letter-spacing:0.72px;">Security risks</div>
<div class="t" style="left:110.5px;top:1011.6px;font-size:28px;color:#3E4A59;letter-spacing:1.43px;">Notifications</div>
<div class="t" style="left:111.5px;top:1101.5px;font-size:28px;color:#3E4A59;letter-spacing:0.83px;">Settings</div>
<svg class="r" style="left:342px;top:248.5px;" width="16" height="10" viewBox="0 0 16 10"><path d="M0 0 L16 0 L8 9.5 Z" fill="#AEBFCF"/></svg>
<svg class="r" style="left:342px;top:339.5px;" width="16" height="10" viewBox="0 0 16 10"><path d="M0 9.5 L16 9.5 L8 0 Z" fill="#77992F"/></svg>
<svg class="r" style="left:342px;top:928px;" width="16" height="10" viewBox="0 0 16 10"><path d="M0 0 L16 0 L8 9.5 Z" fill="#AEBFCF"/></svg>
<svg class="r" style="left:342px;top:1018.8px;" width="16" height="10" viewBox="0 0 16 10"><path d="M0 0 L16 0 L8 9.5 Z" fill="#AEBFCF"/></svg>
<svg class="r" style="left:51.7px;top:57.5px;" width="32" height="32" viewBox="0 0 32 32"><path d="M9.41 26.97 A12.8 12.8 0 1 1 22.59 26.97" fill="none" stroke="#AEBFCF" stroke-width="1.8" stroke-linecap="round"/><path d="M4.91 22.40L7.17 21.10M3.20 16.00L5.80 16.00M4.91 9.60L7.17 10.90M9.60 4.91L10.90 7.17M16.00 3.20L16.00 5.80M22.40 4.91L21.10 7.17M27.09 9.60L24.83 10.90M28.80 16.00L26.20 16.00M27.09 22.40L24.83 21.10" stroke="#AEBFCF" stroke-width="1.6"/><path d="M16 16L22.36 12.62" stroke="#AEBFCF" stroke-width="1.8" stroke-linecap="round"/><circle cx="16" cy="16" r="1.8" fill="#AEBFCF"/></svg>
<svg class="r" style="left:52px;top:146.7px;" width="32" height="32" viewBox="0 0 32 32"><g fill="none" stroke="#AEBFCF" stroke-width="1.7"><circle cx="16" cy="16" r="13.2"/><ellipse cx="16" cy="16" rx="6.8" ry="13.2"/><path d="M16 2.8V29.2"/><path d="M3.6 11.3Q16 13.3 28.4 11.3M3.6 20.7Q16 18.7 28.4 20.7"/></g></svg>
<svg class="r" style="left:54px;top:241px;" width="36" height="30" viewBox="0 0 36 30"><path d="M8.8 4.5 L16.700000000000003 1 L24.6 4.5 L16.700000000000003 8.0 Z" fill="#fff" stroke="#AEBFCF" stroke-width="1.7" stroke-linejoin="round"/><path d="M8.8 4.5 L16.700000000000003 8.0 L16.700000000000003 15.8 L8.8 12.3 Z" fill="#AEBFCF" stroke="#AEBFCF" stroke-width="1.7" stroke-linejoin="round"/><path d="M16.700000000000003 8.0 L24.6 4.5 L24.6 12.3 L16.700000000000003 15.8 Z" fill="#fff" stroke="#AEBFCF" stroke-width="1.7" stroke-linejoin="round"/><path d="M1 15.9 L8.9 12.4 L16.8 15.9 L8.9 19.4 Z" fill="#fff" stroke="#AEBFCF" stroke-width="1.7" stroke-linejoin="round"/><path d="M1 15.9 L8.9 19.4 L8.9 27.2 L1 23.7 Z" fill="#AEBFCF" stroke="#AEBFCF" stroke-width="1.7" stroke-linejoin="round"/><path d="M8.9 19.4 L16.8 15.9 L16.8 23.7 L8.9 27.2 Z" fill="#fff" stroke="#AEBFCF" stroke-width="1.7" stroke-linejoin="round"/><path d="M16.6 15.9 L24.5 12.4 L32.400000000000006 15.9 L24.5 19.4 Z" fill="#fff" stroke="#AEBFCF" stroke-width="1.7" stroke-linejoin="round"/><path d="M16.6 15.9 L24.5 19.4 L24.5 27.2 L16.6 23.7 Z" fill="#AEBFCF" stroke="#AEBFCF" stroke-width="1.7" stroke-linejoin="round"/><path d="M24.5 19.4 L32.400000000000006 15.9 L32.400000000000006 23.7 L24.5 27.2 Z" fill="#fff" stroke="#AEBFCF" stroke-width="1.7" stroke-linejoin="round"/></svg>
<svg class="r" style="left:50px;top:330px;" width="34" height="32" viewBox="0 0 34 32"><g fill="#77992F" transform="translate(14.4 11.5) rotate(-45)"><rect x="5" y="-5.6" width="3.9" height="11.2" rx="1.8"/><rect x="-8.9" y="-5.6" width="3.9" height="11.2" rx="1.8"/><rect x="-6" y="-4.3" width="12" height="8.6"/><rect x="-1.3" y="3" width="2.6" height="9"/><rect x="-3.6" y="10" width="7.2" height="11.5" rx="3.3"/></g></svg>
<svg class="r" style="left:53px;top:834px;" width="32" height="22" viewBox="0 0 32 22"><rect x="5" y="1.3" width="20" height="14.2" rx="2.2" fill="none" stroke="#AEBFCF" stroke-width="1.8"/><path d="M1 17H31V18.2Q31 20 29 20H3Q1 20 1 18.2Z" fill="#AEBFCF"/></svg>
<svg class="r" style="left:54.5px;top:921.5px;" width="25" height="26" viewBox="0 0 25 26"><g fill="#AEBFCF"><path d="M7.2 4.9 A5 5 0 0 1 17.1 4.9 Z"/><path d="M4.3 7 H11 V22.8 Q6.5 22.5 5 19 Q4.2 15 4.3 7Z"/><path d="M13.2 7 H20 Q20.1 15 19.3 19 Q17.8 22.5 13.2 22.8 Z"/></g><g stroke="#AEBFCF" stroke-width="1.7" stroke-linecap="round"><path d="M1.4 4.7L4.6 7.8M23 4.7L19.8 7.8M0.3 14.1H4.3M24.2 14.1H20.2M1.8 24.3L5 20.5M22.6 24.3L19.4 20.5"/></g></svg>
<svg class="r" style="left:54.3px;top:1008.5px;" width="29" height="29" viewBox="0 0 29 29"><g fill="none" stroke="#AEBFCF" stroke-width="1.7" stroke-linejoin="round" stroke-linecap="round"><path d="M6.5 0.9 Q5.8 0.5 5 1 L1.5 4.3 Q0.3 5.6 0.8 7.6 Q2.6 14.6 9.5 21 Q16 26.8 22.5 27.3 Q23.6 27.3 24.6 26.2 L27.6 22.6 Q28 21.8 27.3 21.2 L21 17 Q20.5 16.8 19.9 17.1 L17 18.9 Q12.3 15.5 8.3 10.7 L10.4 7.3 Q10.7 6.7 10.3 6.2 Z"/><path d="M27.3 1 L18.6 9.8 M18.4 3.3 V10.2 H25.2"/></g></svg>
<svg class="r" style="left:54px;top:1103px;" width="26" height="26" viewBox="0 0 26 26"><g fill="#AEBFCF"><path d="M20.3 1.5 Q17 -0.3 13.6 1.7 Q10.2 4 11 8.7 L1.3 18.4 Q0 20 1.4 21.6 L3.6 23.9 Q5 25.1 6.6 23.7 L16.3 14 Q20.6 15.3 23.4 12.1 Q25.5 9.6 25.2 6.7 L21.8 9.6 Q19.5 10.5 18 8.8 Q16.5 7 17.5 5 Z"/></g><rect x="3.9" y="19.3" width="2.2" height="2.2" fill="#fff"/></svg>
<div class="r" style="left:0px;top:1187px;width:2812px;height:41px;background:#fff;"></div>
<div class="r" style="left:2646.1px;top:195.2px;width:127.7px;height:47.6px;background:#555555;border-radius:6px;"></div>
<svg class="r" style="left:2698px;top:242px;" width="24" height="11" viewBox="0 0 24 11"><path d="M0 0.5 H24 L12 10.8Z" fill="#555555"/></svg>
<div class="t" style="left:2661.2px;top:207.0px;font-size:24px;color:#fff;letter-spacing:0.3px;">Scorable</div>
<svg class="r" style="left:2248.11px;top:143.04px;filter:drop-shadow(1px 1.5px 1.2px rgba(60,70,80,0.45))" width="433.39" height="142.88" viewBox="0 0 433.39 142.88"><path d="M427.39 129.56 L389.45 136.88 L394.45 128.96 L310.65 101.24 L6.00 9.07 L6.89 6.00 L313.61 91.06 L399.00 112.90 L399.17 103.68Z" fill="#FF2A03" stroke="#FF2A03" stroke-width="0.8" stroke-linejoin="round"/><circle cx="6.45" cy="7.54" r="1.6" fill="#FF2A03"/></svg>
<svg class="r" style="left:2305.52px;top:795.50px;filter:drop-shadow(1px 1.5px 1.2px rgba(60,70,80,0.45))" width="288.38" height="180.75" viewBox="0 0 288.38 180.75"><path d="M282.38 6.00 L262.11 38.90 L259.66 29.86 L182.57 72.83 L7.66 174.75 L6.00 172.01 L177.06 63.77 L250.91 15.64 L244.23 9.28Z" fill="#FF2A03" stroke="#FF2A03" stroke-width="0.8" stroke-linejoin="round"/><circle cx="6.83" cy="173.38" r="1.6" fill="#FF2A03"/></svg>
</body></html>
